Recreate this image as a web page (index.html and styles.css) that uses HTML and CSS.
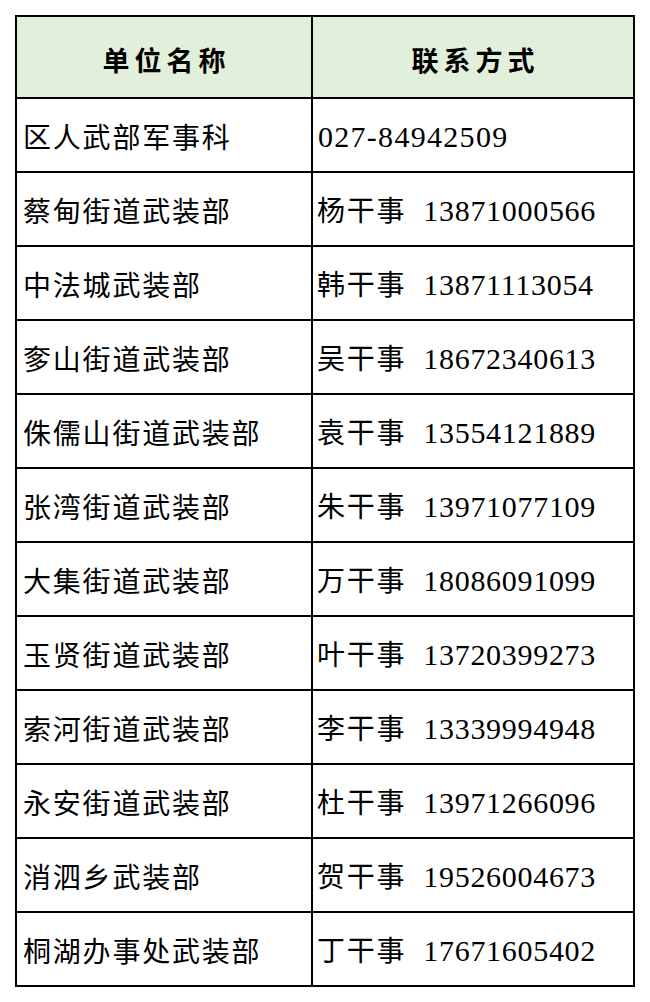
FILE: index.html
```html
<!DOCTYPE html>
<html lang="zh-CN">
<head>
<meta charset="utf-8">
<title>联系方式</title>
<link rel="stylesheet" href="styles.css">
</head>
<body>
<table class="contacts">
  <thead>
    <tr>
      <th class="col-unit">单位名称</th>
      <th class="col-contact">联系方式</th>
    </tr>
  </thead>
  <tbody>
    <tr><td>区人武部军事科</td><td><span class="num first">027-84942509</span></td></tr>
    <tr><td>蔡甸街道武装部</td><td>杨干事<span class="num">13871000566</span></td></tr>
    <tr><td>中法城武装部</td><td>韩干事<span class="num">13871113054</span></td></tr>
    <tr><td>奓山街道武装部</td><td>吴干事<span class="num">18672340613</span></td></tr>
    <tr><td>侏儒山街道武装部</td><td>袁干事<span class="num">13554121889</span></td></tr>
    <tr><td>张湾街道武装部</td><td>朱干事<span class="num">13971077109</span></td></tr>
    <tr><td>大集街道武装部</td><td>万干事<span class="num">18086091099</span></td></tr>
    <tr><td>玉贤街道武装部</td><td>叶干事<span class="num">13720399273</span></td></tr>
    <tr><td>索河街道武装部</td><td>李干事<span class="num">13339994948</span></td></tr>
    <tr><td>永安街道武装部</td><td>杜干事<span class="num">13971266096</span></td></tr>
    <tr><td>消泗乡武装部</td><td>贺干事<span class="num">19526004673</span></td></tr>
    <tr><td>桐湖办事处武装部</td><td>丁干事<span class="num">17671605402</span></td></tr>
  </tbody>
</table>
</body>
</html>
```

FILE: styles.css
```css
html, body {
  margin: 0;
  padding: 0;
  background: #ffffff;
}

body {
  padding: 15px 0 0 15px;
  font-family: "Liberation Serif", "Noto Sans CJK SC", serif;
  color: #000000;
}

.contacts {
  border-collapse: separate;
  border-spacing: 0;
  border-top: 2px solid #000;
  border-left: 2px solid #000;
  table-layout: fixed;
  width: 620px;
}

.contacts th,
.contacts td {
  border-right: 2px solid #000;
  border-bottom: 2px solid #000;
  padding: 0;
  vertical-align: middle;
  white-space: nowrap;
  overflow: hidden;
}

.col-unit {
  width: 294px;
}

.col-contact {
  width: 320px;
}

.contacts th {
  height: 82px;
  background: #e2efda;
  font-family: "Noto Sans CJK SC", serif;
  font-size: 27px;
  font-weight: 700;
  letter-spacing: 5px;
  text-indent: 5px;
  text-align: center;
  padding-top: 4px;
  box-sizing: border-box;
}

.contacts td {
  height: 74px;
  box-sizing: border-box;
  font-family: "Noto Sans CJK SC", serif;
  font-size: 28px;
  font-weight: 400;
  letter-spacing: 1.8px;
  line-height: 1;
  padding-top: 2px;
}

.contacts td:first-child {
  padding-left: 6px;
}

.contacts td:last-child {
  padding-left: 4px;
}

.num {
  font-family: "Liberation Serif", serif;
  font-size: 30px;
  letter-spacing: 0.7px;
  margin-left: 17px;
}

.num.first {
  margin-left: 1px;
  letter-spacing: 1.3px;
}
```
